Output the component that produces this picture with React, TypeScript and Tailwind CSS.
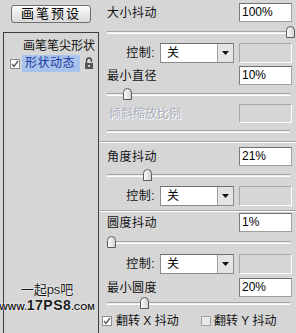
const font = "font-['Liberation_Sans','Noto_Sans_CJK_SC',sans-serif]";

function Thumb({ left }: { left: number }) {
  return (
    <svg className="absolute top-0" style={{ left }} width="9" height="12" viewBox="0 0 9 12">
      <defs>
        <linearGradient id="tg" x1="0" y1="0" x2="1" y2="0">
          <stop offset="0" stopColor="#ffffff" />
          <stop offset="1" stopColor="#d0d0d0" />
        </linearGradient>
      </defs>
      <path d="M0.5 11.5 V4.5 Q0.5 0.5 4.5 0.5 Q8.5 0.5 8.5 4.5 V11.5 Z" fill="url(#tg)" stroke="#5a5a5a" />
    </svg>
  );
}

function Slider({ thumb, h = 12 }: { thumb?: number; h?: number }) {
  return (
    <div className="relative shrink-0" style={{ height: h }}>
      <div className="absolute left-[7px] top-[5px] w-[183px] h-[3px] border-t border-[#a2a2a2] bg-[#f0f0f0] border-b border-b-white" />
      {thumb !== undefined && <Thumb left={thumb} />}
    </div>
  );
}

function InputRow({ label, value, disabled }: { label: string; value?: string; disabled?: boolean }) {
  return (
    <div className="flex items-center justify-between h-[19px] pl-[7px] pr-[4px] shrink-0">
      {disabled ? (
        <span className="text-[12px] text-[#a9b0bc] [text-shadow:1px_1px_0_#ffffff] pl-[2px]">{label}</span>
      ) : (
        <span className="text-[12px] text-[#111] tracking-[0.5px]">{label}</span>
      )}
      {disabled ? (
        <div className="w-[53px] h-[19px] border border-[#a8a8a8] border-b-white border-r-white" />
      ) : (
        <div className="w-[53px] h-full bg-white border border-[#a0a0a0] border-t-[#6e6e6e] border-l-[#7c7c7c] pl-[2px] text-[12px] leading-[17px] text-black">
          {value}
        </div>
      )}
    </div>
  );
}

function ControlRow() {
  return (
    <div className="flex items-center h-[20px] shrink-0">
      <span className="w-[55px] text-right text-[12px] text-[#111] tracking-[0.5px]">控制:</span>
      <div className="ml-[5px] w-[74px] h-full flex bg-white border border-[#8a8a8a] border-t-[#6e6e6e]">
        <span className="flex-1 pl-[6px] text-[12px] leading-[18px] text-black">关</span>
        <div className="w-[16px] h-full flex items-center justify-center bg-[#e4e4e4] border-l border-[#a0a0a0]">
          <svg width="7" height="4" viewBox="0 0 7 4">
            <path d="M0 0 H7 L3.5 4 Z" fill="#111" />
          </svg>
        </div>
      </div>
      <div className="ml-[5px] w-[53px] h-full border border-[#a8a8a8] border-b-white border-r-white" />
    </div>
  );
}

function Separator({ mt }: { mt: string }) {
  return <div className={`${mt} h-[2px] shrink-0 border-t border-[#a4a4a4] border-b border-b-white`} />;
}

function Check({ checked }: { checked?: boolean }) {
  return (
    <div className="w-[10px] h-[10px] shrink-0 bg-white border border-[#8c8c8c] flex items-center justify-center">
      {checked && (
        <svg width="8" height="8" viewBox="0 0 8 8">
          <path d="M1 4 L3 6.5 L7 1" fill="none" stroke="#555" strokeWidth="1.3" />
        </svg>
      )}
    </div>
  );
}

export default function App() {
  return (
    <div className={`relative w-[296px] h-[333px] overflow-hidden bg-[#d6d6d6] flex ${font}`}>
      {/* Left column */}
      <div className="w-[100px] shrink-0 flex flex-col">
        <button className="ml-[11px] mt-[5px] w-[80px] h-[18px] rounded-[3px] border border-[#707070] bg-gradient-to-b from-[#fbfbfb] to-[#dadada] text-[13px] leading-[16px] tracking-[2px] text-black">
          画笔预设
        </button>
        <div className="ml-[3px] mt-[9px] w-[96px] flex-1 border border-[#3c3c3c] border-b-0">
          <div className="mt-[6px] h-[14px] pl-[19px] text-[12px] leading-[14px] text-[#111] whitespace-nowrap">
            画笔笔尖形状
          </div>
          <div className="mt-[2px] h-[17px] flex items-center">
            <div className="ml-[6px]">
              <Check checked />
            </div>
            <div className="ml-[2px] w-[58px] h-full bg-[#a8c3ec] pl-[3px] text-[12px] leading-[17px] text-[#1a3a9e] tracking-[0.5px]">
              形状动态
            </div>
            <svg className="ml-[4px]" width="10" height="13" viewBox="0 0 10 13">
              <path d="M2.5 6 V4 Q2.5 1 5 1 Q7.5 1 7.5 4 V5" fill="none" stroke="#444" strokeWidth="1.4" />
              <rect x="1" y="6" width="8" height="6" fill="#555" />
              <rect x="4" y="8" width="2" height="2" fill="#ccc" />
            </svg>
          </div>
        </div>
      </div>

      {/* Right column */}
      <div className="w-[196px] min-w-0 shrink-0 flex flex-col">
        <div className="mt-[3px]" />
        <InputRow label="大小抖动" value="100%" />
        <div className="mt-[4px]" />
        <Slider thumb={186} h={13} />
        <div className="mt-[4px]" />
        <ControlRow />
        <div className="mt-[3px]" />
        <InputRow label="最小直径" value="10%" />
        <div className="mt-[3px]" />
        <Slider thumb={23} />
        <div className="mt-[4px]" />
        <InputRow label="倾斜缩放比例" disabled />
        <div className="mt-[2px]" />
        <Slider />
        <Separator mt="mt-[4px]" />
        <div className="mt-[4px]" />
        <InputRow label="角度抖动" value="21%" />
        <div className="mt-[3px]" />
        <Slider thumb={43} h={13} />
        <div className="mt-[4px]" />
        <ControlRow />
        <Separator mt="mt-[4px]" />
        <div className="mt-[1px]" />
        <InputRow label="圆度抖动" value="1%" />
        <div className="mt-[4px]" />
        <Slider thumb={7} />
        <div className="mt-[6px]" />
        <ControlRow />
        <div className="mt-[4px]" />
        <InputRow label="最小圆度" value="20%" />
        <Slider thumb={40} />
        <div className="mt-[5px] h-[14px] flex items-center text-[12px] text-[#111] shrink-0">
          <div className="w-[99px] flex items-center">
            <div className="ml-[2px]">
              <Check checked />
            </div>
            <span className="ml-[4px] whitespace-nowrap">翻转 X 抖动</span>
          </div>
          <div className="ml-[2px] flex items-center">
            <div className="w-[10px] h-[10px] bg-[#e8e8e8] border border-[#a0a0a0]" />
            <span className="ml-[3px] whitespace-nowrap">翻转 Y 抖动</span>
          </div>
        </div>
      </div>

      {/* watermark */}
      <div className="absolute left-0 top-[282px] w-[94px] flex flex-col items-center text-[#1a1a1a] [text-shadow:0_0_2px_#ffffff,0_0_1px_#ffffff]">
        <span className="text-[13px] leading-[15px]">一起ps吧</span>
        <div className="flex items-baseline whitespace-nowrap">
          <span className="text-[9px] leading-[16px] font-bold">WWW.</span>
          <span className="text-[14px] leading-[16px] font-black tracking-[0.5px]">17PS8</span>
          <span className="text-[9px] leading-[16px] font-bold">.COM</span>
        </div>
      </div>
    </div>
  );
}
